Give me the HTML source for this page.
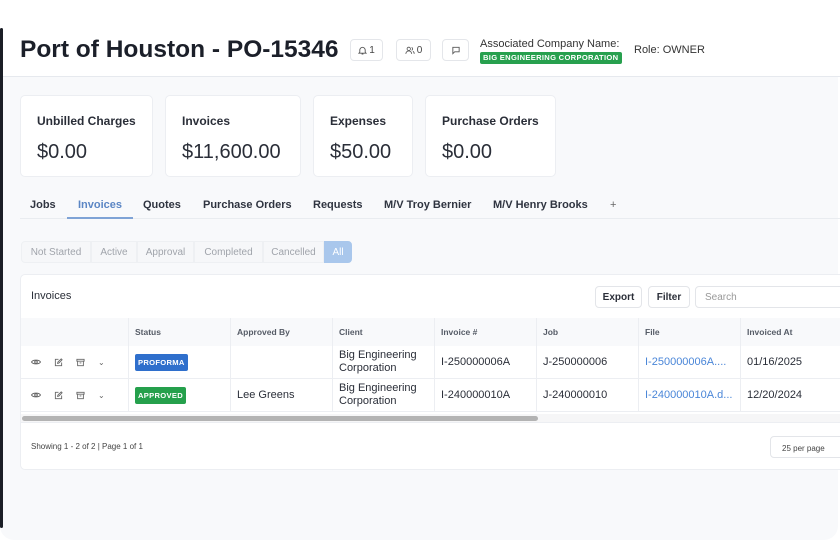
<!DOCTYPE html>
<html><head><meta charset="utf-8"><style>
*{box-sizing:border-box;margin:0;padding:0}
body{width:840px;height:560px;background:#fff;font-family:"Liberation Sans",sans-serif;color:#1f2430;position:relative;overflow:hidden}
.a{position:absolute}
.panel{left:0;top:28px;width:838px;height:512px;background:#f8f9fb;border-radius:14px 0 14px 14px;overflow:hidden}
.dark{left:0;top:28px;width:3px;height:500px;background:#1b1e26;border-radius:2px}
.hdr{left:0;top:28px;width:840px;height:49px;background:#fff;border-bottom:1px solid #e6e9ee}
.ib{height:22px;border:1px solid #e4e6ea;border-radius:4px;background:#fff;font-size:10px;color:#444;display:flex;align-items:center;justify-content:center;gap:2px}
.card{top:95px;height:82px;background:#fff;border:1px solid #eceef2;border-radius:5px}
.card .l{position:absolute;left:16px;top:18px;font-size:12px;font-weight:bold;color:#2a2e38}
.card .v{position:absolute;left:16px;top:45px;font-size:20px;color:#2a2e38}
.tab{top:199px;font-size:11px;font-weight:bold;color:#2f3440}
.pill{top:241px;height:22px;font-size:10px;color:#a0a4ab;display:flex;align-items:center;justify-content:center;border:1px solid #eef0f3;background:#f6f7f9}
.tbl{left:20px;top:274px;width:830px;height:196px;background:#fff;border:1px solid #eceef2;border-radius:5px}
.btn{top:286px;height:22px;border:1px solid #e3e5e9;border-radius:4px;font-size:10px;font-weight:bold;color:#2a2e38;display:flex;align-items:center;justify-content:center;background:#fff}
.th{top:318px;height:28px;background:#f8f9fb;font-size:8.5px;font-weight:bold;color:#555b66;padding:9px 6px;border-right:1px solid #eceef2}
.td{height:33px;font-size:11px;color:#2a2e38;padding:0 6px;display:flex;align-items:center;border-right:1px solid #eceef2;border-bottom:1px solid #eceef2;line-height:13px}
.badge{font-size:7.6px;font-weight:bold;color:#fff;padding:2px 3px;border-radius:2px;letter-spacing:.3px}
</style></head><body>
<div class="a panel"></div>
<div class="a hdr"></div>
<div class="a dark"></div>
<div class="a" style="left:20px;top:36px;font-size:24.5px;font-weight:bold;color:#1b1f29">Port of Houston - PO-15346</div>
<div class="a ib" style="left:350px;top:39px;width:33px"><svg width="9" height="9" viewBox="0 0 10 10" fill="none" stroke="#555" stroke-width="1"><path d="M2 7V4.5a3 3 0 0 1 6 0V7l1 1H1z M4 9h2"/></svg>1</div>
<div class="a ib" style="left:396px;top:39px;width:35px"><svg width="10" height="9" viewBox="0 0 12 10" fill="none" stroke="#555" stroke-width="1"><circle cx="4.5" cy="3" r="2"/><path d="M1 9a3.5 3.5 0 0 1 7 0M8 1.2a2 2 0 0 1 0 3.6M9.5 6a3 3 0 0 1 1.5 3"/></svg>0</div>
<div class="a ib" style="left:442px;top:39px;width:27px"><svg width="10" height="9" viewBox="0 0 10 10" fill="none" stroke="#555" stroke-width="1"><path d="M1.5 1.5h7v5h-5l-2 2z"/></svg></div>
<div class="a" style="left:480px;top:38px;font-size:11px;color:#333">Associated Company Name:</div>
<div class="a badge" style="left:480px;top:52px;width:142px;height:12px;background:#27a04e;padding:1px 3px;font-size:7.6px">BIG ENGINEERING CORPORATION</div>
<div class="a" style="left:634px;top:44px;font-size:11px;color:#333">Role: OWNER</div>

<div class="a card" style="left:20px;width:133px"><div class="l">Unbilled Charges</div><div class="v">$0.00</div></div>
<div class="a card" style="left:165px;width:136px"><div class="l">Invoices</div><div class="v">$11,600.00</div></div>
<div class="a card" style="left:313px;width:100px"><div class="l">Expenses</div><div class="v">$50.00</div></div>
<div class="a card" style="left:425px;width:131px"><div class="l">Purchase Orders</div><div class="v">$0.00</div></div>

<div class="a" style="left:20px;top:218px;width:820px;height:1px;background:#e9ecf0"></div>
<div class="a tab" style="left:30px">Jobs</div>
<div class="a tab" style="left:78px;color:#5b86c4">Invoices</div>
<div class="a" style="left:67px;top:217px;width:66px;height:2px;background:#7fa3d6"></div>
<div class="a tab" style="left:143px">Quotes</div>
<div class="a tab" style="left:203px">Purchase Orders</div>
<div class="a tab" style="left:313px">Requests</div>
<div class="a tab" style="left:384px">M/V Troy Bernier</div>
<div class="a tab" style="left:493px">M/V Henry Brooks</div>
<div class="a tab" style="left:610px;font-weight:normal;color:#666">+</div>

<div class="a pill" style="left:21px;width:70px;border-radius:4px 0 0 4px">Not Started</div>
<div class="a pill" style="left:91px;width:46px">Active</div>
<div class="a pill" style="left:137px;width:57px">Approval</div>
<div class="a pill" style="left:194px;width:69px">Completed</div>
<div class="a pill" style="left:263px;width:61px">Cancelled</div>
<div class="a pill" style="left:324px;width:28px;background:#a9c7ec;border-color:#a9c7ec;color:#fff;border-radius:0 4px 4px 0">All</div>

<div class="a tbl"></div>
<div class="a" style="left:31px;top:290px;font-size:11px;color:#2a2e38">Invoices</div>
<div class="a btn" style="left:595px;width:47px">Export</div>
<div class="a btn" style="left:648px;width:42px">Filter</div>
<div class="a btn" style="left:695px;width:150px;justify-content:flex-start;padding-left:9px;font-weight:normal;color:#999">Search</div>

<div class="a th" style="left:21px;width:108px"></div>
<div class="a th" style="left:129px;width:102px">Status</div>
<div class="a th" style="left:231px;width:102px">Approved By</div>
<div class="a th" style="left:333px;width:102px">Client</div>
<div class="a th" style="left:435px;width:102px">Invoice #</div>
<div class="a th" style="left:537px;width:102px">Job</div>
<div class="a th" style="left:639px;width:102px">File</div>
<div class="a th" style="left:741px;width:99px;border-right:none">Invoiced At</div>

<div class="a" style="left:21px;top:346px">
<div style="display:flex">
<div class="td" style="width:108px;gap:13px;padding-left:10px;color:#666;font-size:9px"><svg width="10" height="8" viewBox="0 0 10 8" fill="none" stroke="#666" stroke-width="1"><path d="M.5 4C2 1.5 8 1.5 9.5 4 8 6.5 2 6.5.5 4z"/><circle cx="5" cy="4" r="1.3"/></svg><svg width="9" height="9" viewBox="0 0 10 10" fill="none" stroke="#666" stroke-width="1"><path d="M5 1.5H1.5v7h7V5M4 6l.3-1.5L8 1l1 1-3.6 3.6z"/></svg><svg width="9" height="9" viewBox="0 0 10 10" fill="none" stroke="#666" stroke-width="1"><path d="M1 1.5h8v2H1zM1.8 3.5v5h6.4v-5M4 5.5h2"/></svg><span style="font-size:8px">⌄</span></div>
<div class="td" style="width:102px"><span class="badge" style="background:#2f6fcc">PROFORMA</span></div>
<div class="td" style="width:102px"></div>
<div class="td" style="width:102px">Big Engineering Corporation</div>
<div class="td" style="width:102px">I-250000006A</div>
<div class="td" style="width:102px">J-250000006</div>
<div class="td" style="width:102px;color:#4a86d8">I-250000006A....</div>
<div class="td" style="width:99px;border-right:none">01/16/2025</div>
</div>
<div style="display:flex">
<div class="td" style="width:108px;gap:13px;padding-left:10px;color:#666;font-size:9px"><svg width="10" height="8" viewBox="0 0 10 8" fill="none" stroke="#666" stroke-width="1"><path d="M.5 4C2 1.5 8 1.5 9.5 4 8 6.5 2 6.5.5 4z"/><circle cx="5" cy="4" r="1.3"/></svg><svg width="9" height="9" viewBox="0 0 10 10" fill="none" stroke="#666" stroke-width="1"><path d="M5 1.5H1.5v7h7V5M4 6l.3-1.5L8 1l1 1-3.6 3.6z"/></svg><svg width="9" height="9" viewBox="0 0 10 10" fill="none" stroke="#666" stroke-width="1"><path d="M1 1.5h8v2H1zM1.8 3.5v5h6.4v-5M4 5.5h2"/></svg><span style="font-size:8px">⌄</span></div>
<div class="td" style="width:102px"><span class="badge" style="background:#25a04c">APPROVED</span></div>
<div class="td" style="width:102px">Lee Greens</div>
<div class="td" style="width:102px">Big Engineering Corporation</div>
<div class="td" style="width:102px">I-240000010A</div>
<div class="td" style="width:102px">J-240000010</div>
<div class="td" style="width:102px;color:#4a86d8">I-240000010A.d...</div>
<div class="td" style="width:99px;border-right:none">12/20/2024</div>
</div>
</div>
<div class="a" style="left:21px;top:414px;width:820px;height:9px;background:#f6f6f7;border-bottom:1px solid #eceef2"></div>
<div class="a" style="left:22px;top:416px;width:516px;height:5px;background:#b3b3b3;border-radius:3px"></div>
<div class="a" style="left:31px;top:442px;font-size:8px;color:#444">Showing 1 - 2 of 2 | Page 1 of 1</div>
<div class="a" style="left:770px;top:436px;width:80px;height:22px;border:1px solid #e3e5e9;border-radius:4px;background:#fff;font-size:8px;color:#444;padding:7px 11px">25 per page</div>
</body></html>
